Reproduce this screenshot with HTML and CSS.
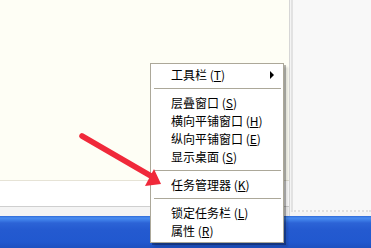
FILE: index.html
```html
<!DOCTYPE html>
<html>
<head>
<meta charset="utf-8">
<link rel="stylesheet" href="styles.css">
</head>
<body>
<div class="screen">
  <div class="main">
    <div class="left">
      <div class="cream"></div>
      <div class="white"></div>
      <div class="lightband"></div>
    </div>
    <div class="right"><div class="rightinner"></div></div>
  </div>
  <div class="taskbar"></div>

  <div class="menu">
    <div class="item"><span class="label">工具栏 (<u>T</u>)</span><span class="sub"></span></div>
    <div class="sep"></div>
    <div class="item"><span class="label">层叠窗口 (<u>S</u>)</span></div>
    <div class="item"><span class="label">横向平铺窗口 (<u>H</u>)</span></div>
    <div class="item"><span class="label">纵向平铺窗口 (<u>E</u>)</span></div>
    <div class="item"><span class="label">显示桌面 (<u>S</u>)</span></div>
    <div class="sep"></div>
    <div class="item"><span class="label">任务管理器 (<u>K</u>)</span></div>
    <div class="sep"></div>
    <div class="item"><span class="label">锁定任务栏 (<u>L</u>)</span></div>
    <div class="item"><span class="label">属性 (<u>R</u>)</span></div>
  </div>

  <svg class="arrow" width="371" height="248" viewBox="0 0 371 248">
    <line x1="82" y1="136" x2="151" y2="176" stroke="#f0293a" stroke-width="5.5" stroke-linecap="round"/>
    <polygon points="161,184 145,186 154,169" fill="#f0293a"/>
  </svg>
</div>
</body>
</html>
```
FILE: styles.css
```css
html, body {
  margin: 0;
  padding: 0;
}
body {
  width: 371px;
  height: 248px;
  overflow: hidden;
  font-family: "Noto Sans CJK SC", "Noto Sans", sans-serif;
}
.screen {
  position: relative;
  width: 371px;
  height: 248px;
  display: flex;
  flex-direction: column;
}
.main {
  display: flex;
  height: 216px;
}
.left {
  width: 289px;
  display: flex;
  flex-direction: column;
}
.cream {
  height: 180px;
  background: #fefef5;
  border-bottom: 1px solid #e6e3d6;
}
.white {
  height: 25px;
  background: #ffffff;
  border-bottom: 1px solid #cfcfcf;
}
.lightband {
  flex: 1;
  background: #f4f4f4;
}
.right {
  flex: 1;
  background: #f4f4f4;
  border-left: 1px solid #d6d6d6;
  padding-left: 1px;
}
.rightinner {
  height: 210px;
  background: #f8f8f8;
  border-left: 2px solid #e2e2e2;
  border-bottom: 2px dotted #e0e0e0;
}
.taskbar {
  height: 32px;
  background: linear-gradient(to bottom, #2f6ad8 0px, #4a8cf0 2px, #3e7ee8 4px, #2c63d6 7px, #245ad0 14px, #2158cf 26px, #1e50c0 32px);
}
.arrow {
  position: absolute;
  left: 0;
  top: 0;
  pointer-events: none;
}
.menu {
  position: absolute;
  left: 150px;
  top: 63px;
  width: 132px;
  padding: 2px 0;
  background: #ffffff;
  border: 1px solid #aca899;
  box-shadow: 2px 2px 0 rgba(0,0,0,0.28), 4px 4px 2px rgba(0,0,0,0.12);
  font-size: 12px;
  color: #000;
}
.item {
  height: 18px;
  display: flex;
  align-items: center;
  padding-left: 20px;
  padding-right: 8px;
  line-height: 18px;
}
.label {
  flex: 1;
  white-space: nowrap;
}
.label u {
  text-decoration-thickness: 1px;
  text-underline-offset: 1px;
}
.sub {
  width: 0;
  height: 0;
  border-top: 4px solid transparent;
  border-bottom: 4px solid transparent;
  border-left: 4px solid #000;
  margin-right: 1px;
}
.sep {
  height: 1px;
  margin: 4px 2px 4px 3px;
  background: #aca899;
  border-bottom: 1px solid #fff;
}
```
